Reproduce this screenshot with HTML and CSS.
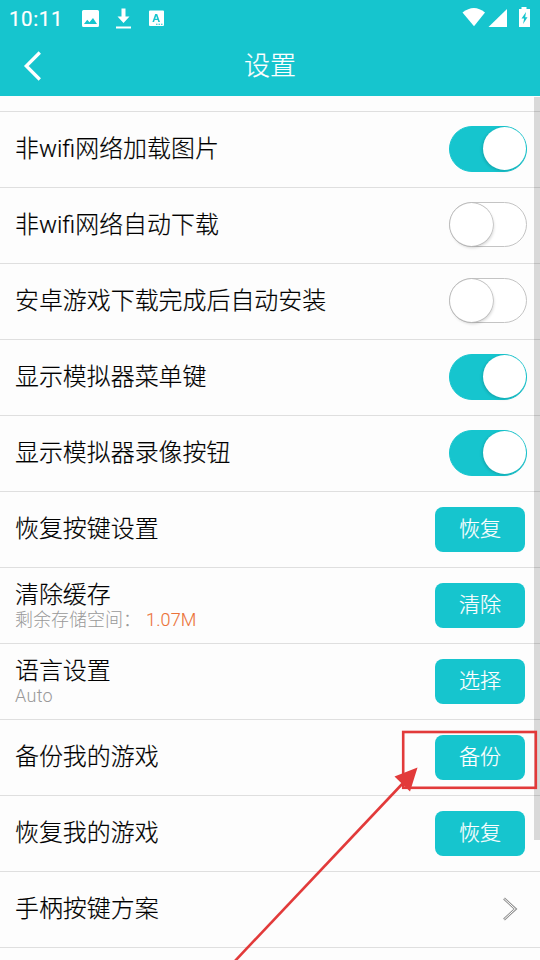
FILE: index.html
```html
<!DOCTYPE html>
<html lang="zh-CN">
<head>
<meta charset="utf-8">
<title>设置</title>
<link rel="stylesheet" href="styles.css">
</head>
<body>
<div class="screen">
  <header class="header">
    <div class="status">
      <span class="clock">10:11</span>
      <svg class="status-left" width="84" height="22" viewBox="81 8 84 22" fill="#fff">
        <path fill-rule="evenodd" d="M83.500 10h14a1.500 1.500 0 0 1 1.500 1.500v14a1.500 1.500 0 0 1-1.500 1.500h-14a1.500 1.500 0 0 1-1.500-1.500v-14a1.500 1.500 0 0 1 1.500-1.500zM84 24h13l-4-6-3.500 4.200-2.300-2.500z"/>
        <path d="M121.500 8.500h4v8h4L123.500 23l-6-6.500h4zM116 26.500h15v2h-15z"/>
        <path fill-rule="evenodd" d="M150 10.500h13a1 1 0 0 1 1 1v13.500a1 1 0 0 1-1 1h-13a1 1 0 0 1-1-1v-13.500a1 1 0 0 1 1-1zM155.200 14l-2.800 8h1.700l.6-1.900h3l.6 1.900h1.700l-2.800-8zM156.200 15.900l1 2.900h-2zM156 23.800v1h1.500v-1zM158.500 23.800v1h1.500v-1zM161 23.800v1h1.500v-1z"/>
      </svg>
      <svg class="status-right" width="70" height="22" viewBox="462 6 70 22" fill="#fff">
        <path d="M462.500 12.500Q474 3.500 485 12.500L474 26.300z"/>
        <path d="M507 9v18h-18.500z"/>
        <path fill-rule="evenodd" d="M521.500 7h5v2h3.500v18h-11V9h2.500zM526 12l-4.500 6.500h2.600l-1 5.500 4.400-6.800h-2.300z"/>
      </svg>
    </div>
    <div class="titlebar">
      <svg class="back" width="20" height="32" viewBox="0 0 20 32"><path d="M17.800 2.500L4.300 16l13.500 13.500" fill="none" stroke="#fff" stroke-width="3.300"/></svg>
      <h1 class="title">设置</h1>
    </div>
  </header>
  <main class="list">
    <div class="lead"></div>
    <div class="row"><span class="label">非wifi网络加载图片</span><span class="switch on"><i class="knob"></i></span></div>
    <div class="row"><span class="label">非wifi网络自动下载</span><span class="switch"><i class="knob"></i></span></div>
    <div class="row"><span class="label">安卓游戏下载完成后自动安装</span><span class="switch"><i class="knob"></i></span></div>
    <div class="row"><span class="label">显示模拟器菜单键</span><span class="switch on"><i class="knob"></i></span></div>
    <div class="row"><span class="label">显示模拟器录像按钮</span><span class="switch on"><i class="knob"></i></span></div>
    <div class="row"><span class="label">恢复按键设置</span><span class="btn">恢复</span></div>
    <div class="row"><div class="stack"><span class="label">清除缓存</span><span class="sub">剩余存储空间：<b class="size">1.07M</b></span></div><span class="btn">清除</span></div>
    <div class="row"><div class="stack"><span class="label">语言设置</span><span class="sub latin">Auto</span></div><span class="btn">选择</span></div>
    <div class="row"><span class="label">备份我的游戏</span><span class="btn">备份</span></div>
    <div class="row"><span class="label">恢复我的游戏</span><span class="btn">恢复</span></div>
    <div class="row"><span class="label">手柄按键方案</span>
      <svg class="chevron" width="16" height="24" viewBox="0 0 16 24" fill="none"><path d="M2 1.500L13.500 12 2 22.500" stroke="#8f8f8f" stroke-width="2.600"/><path d="M2.300 1.800L13.300 12 2.300 22.200" stroke="#fff" stroke-width="1"/></svg>
    </div>
  </main>
  <div class="scrollbar"></div>
  <svg class="callout" width="540" height="960" viewBox="0 0 540 960">
    <rect x="403.200" y="732" width="132.600" height="55.800" fill="none" stroke="#e23a3a" stroke-width="2.600"/>
    <path d="M234 962L405 781" stroke="#e23a3a" stroke-width="2.600"/>
    <path d="M417.500 767.500L394.500 776.500 410 791.500z" fill="#e23a3a"/>
  </svg>
</div>
</body>
</html>
```

FILE: styles.css
```css
* { box-sizing: border-box; }
body {
  margin: 0;
  background: #fdfdfd;
  font-family: Roboto, "Noto Sans CJK SC", sans-serif;
  font-weight: 300;
  color: #000;
}
.screen { position: relative; width: 540px; height: 960px; overflow: hidden; }
.header { height: 96px; background: #16c5ce; color: #fff; }
.status { height: 36px; display: flex; align-items: flex-start; padding: 0 8px 0 9px; }
.clock { width: 72px; font-size: 20.5px; font-weight: 400; line-height: 38px; letter-spacing: .6px; -webkit-text-stroke: .2px #fff; }
.status-left { margin-top: 8px; }
.status-right { margin: 6px 0 0 auto; }
.titlebar { height: 60px; display: grid; grid-template-columns: 60px 1fr 60px; align-items: center; }
.back { margin-left: 22px; }
.title { margin: 0; font-size: 26px; font-weight: 300; line-height: 60px; text-align: center; -webkit-text-stroke: .2px #fff; }
.lead { height: 16px; border-bottom: 1px solid #dfdfdf; }
.row {
  height: 76px;
  border-bottom: 1px solid #dfdfdf;
  padding: 0 13px 0 15px;
  display: flex;
  align-items: center;
  justify-content: space-between;
}
.label { font-size: 23.95px; line-height: 36px; white-space: nowrap; margin-top: -1px; -webkit-text-stroke: .18px #000; }
.stack { display: flex; flex-direction: column; padding-top: 3px; }
.stack .label { line-height: 26px; }
.sub { font-size: 18px; line-height: 24px; color: #999; white-space: nowrap; }
.latin { letter-spacing: .3px; }
.size { color: #ec7238; font-weight: 300; margin-left: 5px; letter-spacing: .15px; -webkit-text-stroke: .1px #ec7238; }
.switch {
  width: 78px;
  height: 45px;
  margin-top: -2px;
  border: 1px solid #c4c4c4;
  border-radius: 23px;
  display: flex;
  background: #fff;
}
.switch.on { height: 46px; margin-top: -1px; background: #16c5ce; border-color: #16c5ce; justify-content: flex-end; }
.knob { width: 43px; height: 43px; border-radius: 50%; background: #fff; box-shadow: 0 0 0 .7px #bbb, 1px 2px 3px rgba(0, 0, 0, .16); }
.on .knob { box-shadow: -1px 1px 3px rgba(0, 0, 0, .16); }
.btn {
  width: 90px;
  height: 45px;
  margin-right: 2px;
  border-radius: 8px;
  background: #16c5ce;
  color: #fff;
  font-size: 21px;
  line-height: 45px;
  text-align: center;
  -webkit-text-stroke: .2px #fff;
}
.chevron { margin: -2px 9px 0 0; }
.scrollbar { position: absolute; right: 0; top: 97px; width: 6px; height: 743px; background: rgba(0, 0, 0, .14); }
.callout { position: absolute; left: 0; top: 0; }
```
